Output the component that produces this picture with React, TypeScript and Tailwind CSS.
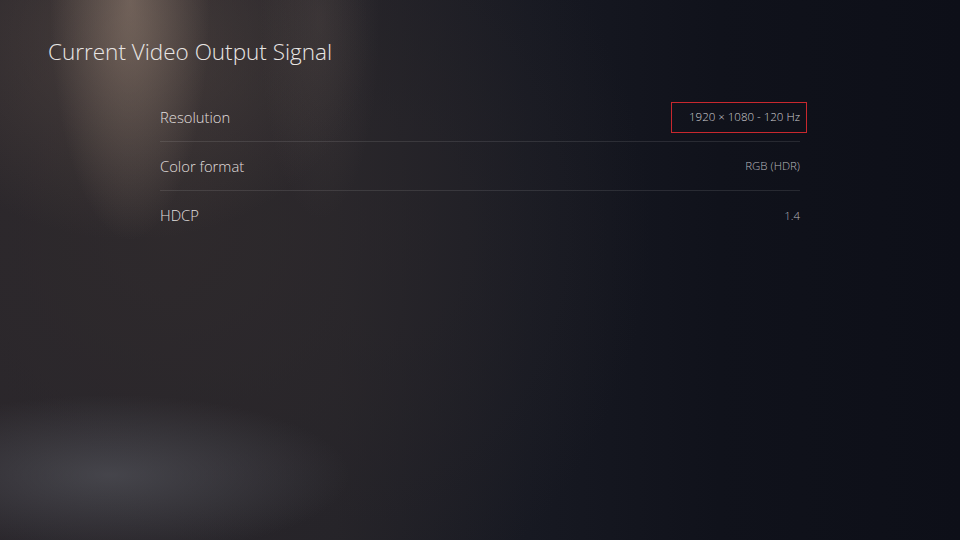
const rows = [
  { label: "Resolution", value: "1920 × 1080 - 120 Hz", focused: true },
  { label: "Color format", value: "RGB (HDR)" },
  { label: "HDCP", value: "1.4" },
];

export default function App() {
  return (
    <div
      className="w-[960px] h-[540px] overflow-hidden bg-[#0f111a] bg-[radial-gradient(ellipse_80px_240px_at_130px_0px,rgba(160,138,122,0.5),transparent),radial-gradient(ellipse_60px_200px_at_320px_20px,rgba(120,105,98,0.18),transparent),radial-gradient(ellipse_240px_200px_at_130px_40px,rgba(110,92,82,0.4),transparent),radial-gradient(ellipse_240px_80px_at_110px_475px,rgba(92,94,102,0.55),transparent),radial-gradient(ellipse_480px_460px_at_170px_230px,rgba(48,43,45,0.85),transparent),linear-gradient(90deg,#27242a_0%,#232228_35%,#171922_55%,#10121b_75%,#0d0f18_100%)]"
      style={{ fontFamily: '"Open Sans", "Noto Sans", sans-serif' }}
    >
      <div className="pt-[38px] pl-[48px]">
        <h1 className="text-[22.5px] leading-[28px] text-[#e9e6e4] font-light">
          Current Video Output Signal
        </h1>
      </div>
      <div className="mt-[27px] ml-[160px] w-[640px] flex flex-col">
        {rows.map((r, i) => (
          <div
            key={r.label}
            className={
              "h-[49px] flex items-center justify-between " +
              (i < rows.length - 1 ? "border-b border-[#ffffff1a]" : "")
            }
          >
            <span className="text-[14.8px] font-light text-[#e0dedd]">{r.label}</span>
            {r.focused ? (
              <span className="-mr-[7px] h-[31px] flex items-center pl-[17px] pr-[6px] border-[1.5px] border-[#c8282e] text-[11.5px] font-light text-[#cfcfd3]">
                {r.value}
              </span>
            ) : (
              <span className="text-[11.5px] font-light text-[#b8b8bd]">{r.value}</span>
            )}
          </div>
        ))}
      </div>
    </div>
  );
}
